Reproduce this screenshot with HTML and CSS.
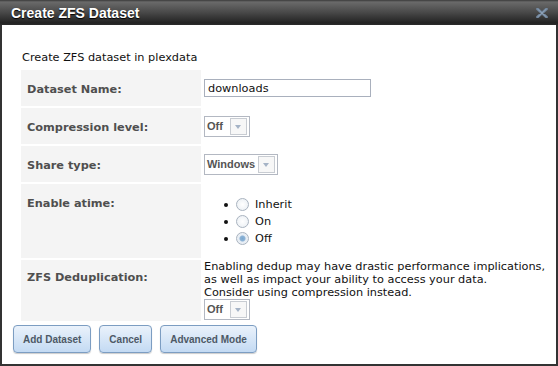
FILE: index.html
```html
<!DOCTYPE html>
<html>
<head>
    <link rel="stylesheet" href="styles.css">
</head>
<body>
    <div class="dialog">
        <div class="titlebar">
            <span class="title">Create ZFS Dataset</span>
            <span class="close">
                <svg width="12" height="10" viewBox="0 0 12 10">
                    <path d="M1.5 1 L10.5 9 M10.5 1 L1.5 9" stroke="#6f8399" stroke-width="2.8" stroke-linecap="round"/>
                    <path d="M1.5 1 L10.5 9 M10.5 1 L1.5 9" stroke="#8ea2b8" stroke-width="1"/>
                </svg>
            </span>
        </div>

        <div class="content">
            <p class="intro">Create ZFS dataset in plexdata</p>

            <table class="form">
                <tr class="row-name">
                    <th>Dataset Name:</th>
                    <td><input class="text-input" type="text" value="downloads"></td>
                </tr>
                <tr class="row-select">
                    <th>Compression level:</th>
                    <td>
                        <span class="select"><span class="select-value">Off</span><span class="select-arrow"></span></span>
                    </td>
                </tr>
                <tr class="row-select">
                    <th>Share type:</th>
                    <td>
                        <span class="select"><span class="select-value">Windows</span><span class="select-arrow"></span></span>
                    </td>
                </tr>
                <tr>
                    <th>Enable atime:</th>
                    <td>
                        <ul class="radios">
                            <li><span class="radio"></span>Inherit</li>
                            <li><span class="radio"></span>On</li>
                            <li><span class="radio checked"></span>Off</li>
                        </ul>
                    </td>
                </tr>
                <tr>
                    <th class="dedup-label">ZFS Deduplication:</th>
                    <td class="dedup">
                        <div class="note">Enabling dedup may have drastic performance implications,<br>as well as impact your ability to access your data.<br>Consider using compression instead.</div>
                        <span class="select"><span class="select-value">Off</span><span class="select-arrow"></span></span>
                    </td>
                </tr>
            </table>

            <div class="buttons">
                <button class="btn">Add Dataset</button>
                <button class="btn">Cancel</button>
                <button class="btn">Advanced Mode</button>
            </div>
        </div>
    </div>
</body>
</html>
```

FILE: styles.css
```css
body {
    margin: 0;
    font-family: "DejaVu Sans", Verdana, sans-serif;
    font-size: 11.3px;
    color: #111;
}
.dialog {
    width: 558px;
    height: 366px;
    box-sizing: border-box;
    border: 2px solid #333;
    border-top: 0;
    background-color: #fff;
}
.titlebar {
    height: 25px;
    margin: 0 -2px;
    display: flex;
    align-items: center;
    justify-content: space-between;
    padding: 0 10px 0 11px;
    background: linear-gradient(#3a3a3a 0, #6a6a6a 2px, #4a4a4a 12px, #222 23px, #2c2c2c 25px);
}
.title {
    color: #fff;
    font-family: "Liberation Sans", Arial, sans-serif;
    font-weight: bold;
    font-size: 14px;
    text-shadow: 0 1px 1px #000;
}
.close {
    display: flex;
    margin-top: 1px;
}
.content {
    padding: 0 0 0 9px;
}
.intro {
    margin: 26px 0 0 11px;
    line-height: 14px;
}
.form {
    border-spacing: 2px;
    margin-top: 3px;
    margin-left: 8px;
}
.form th {
    width: 168px;
    background-color: #f4f4f4;
    color: #4f4f4f;
    font-weight: bold;
    text-align: left;
    vertical-align: top;
    padding: 13px 6px 0 6px;
    line-height: 14px;
}
.form th.dedup-label {
    padding-top: 11px;
}
.form td {
    padding: 0 0 0 1px;
    vertical-align: middle;
}
.form td.dedup {
    padding-bottom: 1px;
}
.row-name th {
    height: 23px;
}
.row-select th {
    height: 23px;
}
.text-input {
    display: block;
    width: 167px;
    height: 18px;
    box-sizing: border-box;
    border: 1px solid #a9b0bd;
    padding: 0 3px;
    font-family: inherit;
    font-size: 11.3px;
    color: #111;
}
.select {
    display: flex;
    width: max-content;
    border: 1px solid #b3b8c2;
    height: 21px;
    box-sizing: border-box;
}
.select-value {
    min-width: 20px;
    font-family: "Liberation Sans", Arial, sans-serif;
    font-weight: bold;
    font-size: 11px;
    color: #555;
    padding: 0 3px 0 2px;
    line-height: 19px;
}
.select-arrow {
    width: 17px;
    box-sizing: border-box;
    border: 1px solid #c8ccd2;
    margin: 1px 2px 1px 0;
    position: relative;
    background-color: #f7f7f7;
}
.select-arrow::after {
    content: "";
    position: absolute;
    left: 4px;
    top: 6px;
    border-left: 3.5px solid transparent;
    border-right: 3.5px solid transparent;
    border-top: 4px solid #a5b3c6;
}
.radios {
    margin: 12px 0 11px;
    padding-left: 32px;
}
.radios li {
    line-height: 17px;
    height: 17px;
    display: flex;
    align-items: center;
    position: relative;
}
.radios li::before {
    content: "";
    position: absolute;
    left: -12px;
    top: 7px;
    width: 4px;
    height: 4px;
    border-radius: 50%;
    background-color: #111;
}
.radio {
    width: 11px;
    height: 11px;
    border: 1px solid #a9b3bf;
    border-radius: 50%;
    background: radial-gradient(#fff, #e8edf2);
    margin: 0 6px 0 0;
    box-sizing: content-box;
}
.radio.checked {
    background: radial-gradient(#7aa7cf 0, #8db3d6 2.5px, #e6edf4 3.5px, #f0f3f6 100%);
}
.note {
    line-height: 13px;
}
.buttons {
    display: flex;
    gap: 8px;
    margin-top: 2px;
    margin-left: 2px;
}
.btn {
    height: 28px;
    padding: 0 9px;
    border: 1px solid #7c9dc2;
    border-radius: 4px;
    background: linear-gradient(#eaf2fb, #c3daf3);
    box-shadow: 0 1px 1px rgba(0, 0, 0, 0.2);
    font-family: "Liberation Sans", Arial, sans-serif;
    font-size: 10px;
    font-weight: bold;
    color: #4d5966;
}
```
